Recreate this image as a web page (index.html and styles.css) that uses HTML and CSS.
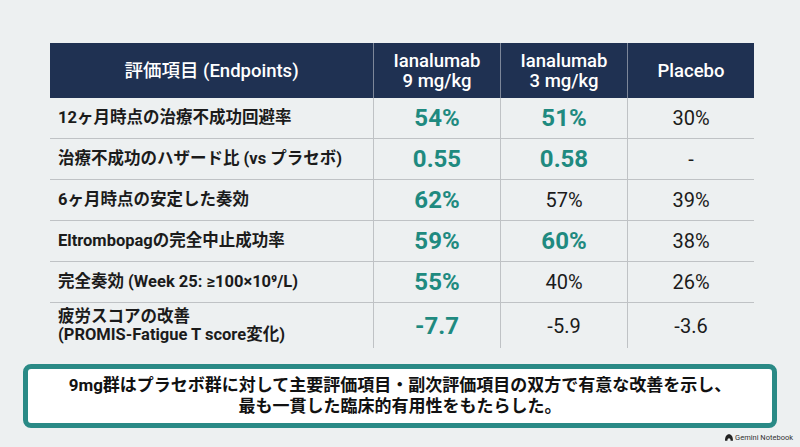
FILE: index.html
```html
<!DOCTYPE html>
<html lang="ja">
<head>
<meta charset="utf-8">
<link rel="stylesheet" href="styles.css">
</head>
<body>
<div class="page">
  <table class="results">
    <thead>
      <tr>
        <th class="c-label">評価項目 (Endpoints)</th>
        <th class="c-val">Ianalumab<br>9 mg/kg</th>
        <th class="c-val">Ianalumab<br>3 mg/kg</th>
        <th class="c-val">Placebo</th>
      </tr>
    </thead>
    <tbody>
      <tr>
        <td class="label">12ヶ月時点の治療不成功回避率</td>
        <td class="hi">54%</td>
        <td class="hi">51%</td>
        <td class="num">30%</td>
      </tr>
      <tr>
        <td class="label">治療不成功のハザード比 (vs プラセボ)</td>
        <td class="hi">0.55</td>
        <td class="hi">0.58</td>
        <td class="num">-</td>
      </tr>
      <tr>
        <td class="label">6ヶ月時点の安定した奏効</td>
        <td class="hi">62%</td>
        <td class="num">57%</td>
        <td class="num">39%</td>
      </tr>
      <tr>
        <td class="label">Eltrombopagの完全中止成功率</td>
        <td class="hi">59%</td>
        <td class="hi">60%</td>
        <td class="num">38%</td>
      </tr>
      <tr>
        <td class="label">完全奏効 (Week 25: ≥100×10⁹/L)</td>
        <td class="hi">55%</td>
        <td class="num">40%</td>
        <td class="num">26%</td>
      </tr>
      <tr class="tall">
        <td class="label">疲労スコアの改善<br>(PROMIS-Fatigue T score変化)</td>
        <td class="hi">-7.7</td>
        <td class="num">-5.9</td>
        <td class="num">-3.6</td>
      </tr>
    </tbody>
  </table>

  <div class="summary">
    <p>9mg群はプラセボ群に対して主要評価項目・副次評価項目の双方で有意な改善を示し、<br>最も一貫した臨床的有用性をもたらした。</p>
  </div>

  <div class="brand">
    <svg class="brand-icon" viewBox="0 0 10 8" width="8" height="7" aria-hidden="true"><path d="M0 8 C0 3 2 0 5 0 C8 0 10 3 10 8 L7 8 C7 6 6 5 5 5 C4 5 3 6 3 8 Z" fill="#222"/></svg>
    <span>Gemini Notebook</span>
  </div>
</div>
</body>
</html>
```
FILE: styles.css
```css
html, body {
  margin: 0;
  padding: 0;
}
body {
  background: #edf0f1;
  font-family: Roboto, "Noto Sans CJK JP", sans-serif;
  color: #1a1a1a;
  width: 800px;
  height: 447px;
  overflow: hidden;
}
.page {
  padding-top: 43px;
  display: flex;
  flex-direction: column;
}
.results {
  margin: 0 50px;
  width: 700px;
  border-collapse: collapse;
  table-layout: fixed;
}
.results th {
  background: #1f3152;
  color: #fff;
  font-weight: 500;
  font-size: 18.5px;
  line-height: 20px;
  height: 55px;
  padding: 0;
  text-align: center;
  border-left: 1px solid #7d8799;
}
.results th:first-child {
  border-left: none;
}
.c-label { width: 323px; }
.c-val { width: 126px; }
.results td {
  padding: 0;
  height: 40px;
  text-align: center;
  border-top: 1px solid #bfc2c5;
  border-left: 1px solid #bfc2c5;
}
.results tbody tr:first-child td {
  border-top: none;
}
.results td.label {
  border-left: none;
  text-align: left;
  padding-left: 8px;
  font-weight: 700;
  font-size: 16.5px;
  line-height: 18px;
  color: #1b1b1b;
}
.results tr.tall td {
  height: 45px;
}
.hi {
  color: #1f8a80;
  font-weight: 700;
  font-size: 24px;
}
.num {
  color: #1b1b1b;
  font-weight: 400;
  font-size: 20px;
}
.summary {
  margin: 16px 23px 0;
  height: 64px;
  box-sizing: border-box;
  border: 5px solid #2a8a86;
  border-radius: 8px;
  background: #fff;
  display: flex;
  align-items: center;
  justify-content: center;
}
.summary p {
  margin: 0;
  text-align: center;
  font-weight: 700;
  font-size: 17px;
  line-height: 21px;
  color: #111;
}
.brand {
  display: flex;
  justify-content: flex-end;
  align-items: center;
  gap: 2px;
  margin-top: 5px;
  padding-right: 7px;
  font-family: Roboto, sans-serif;
  font-size: 7.5px;
  color: #333;
}
```
